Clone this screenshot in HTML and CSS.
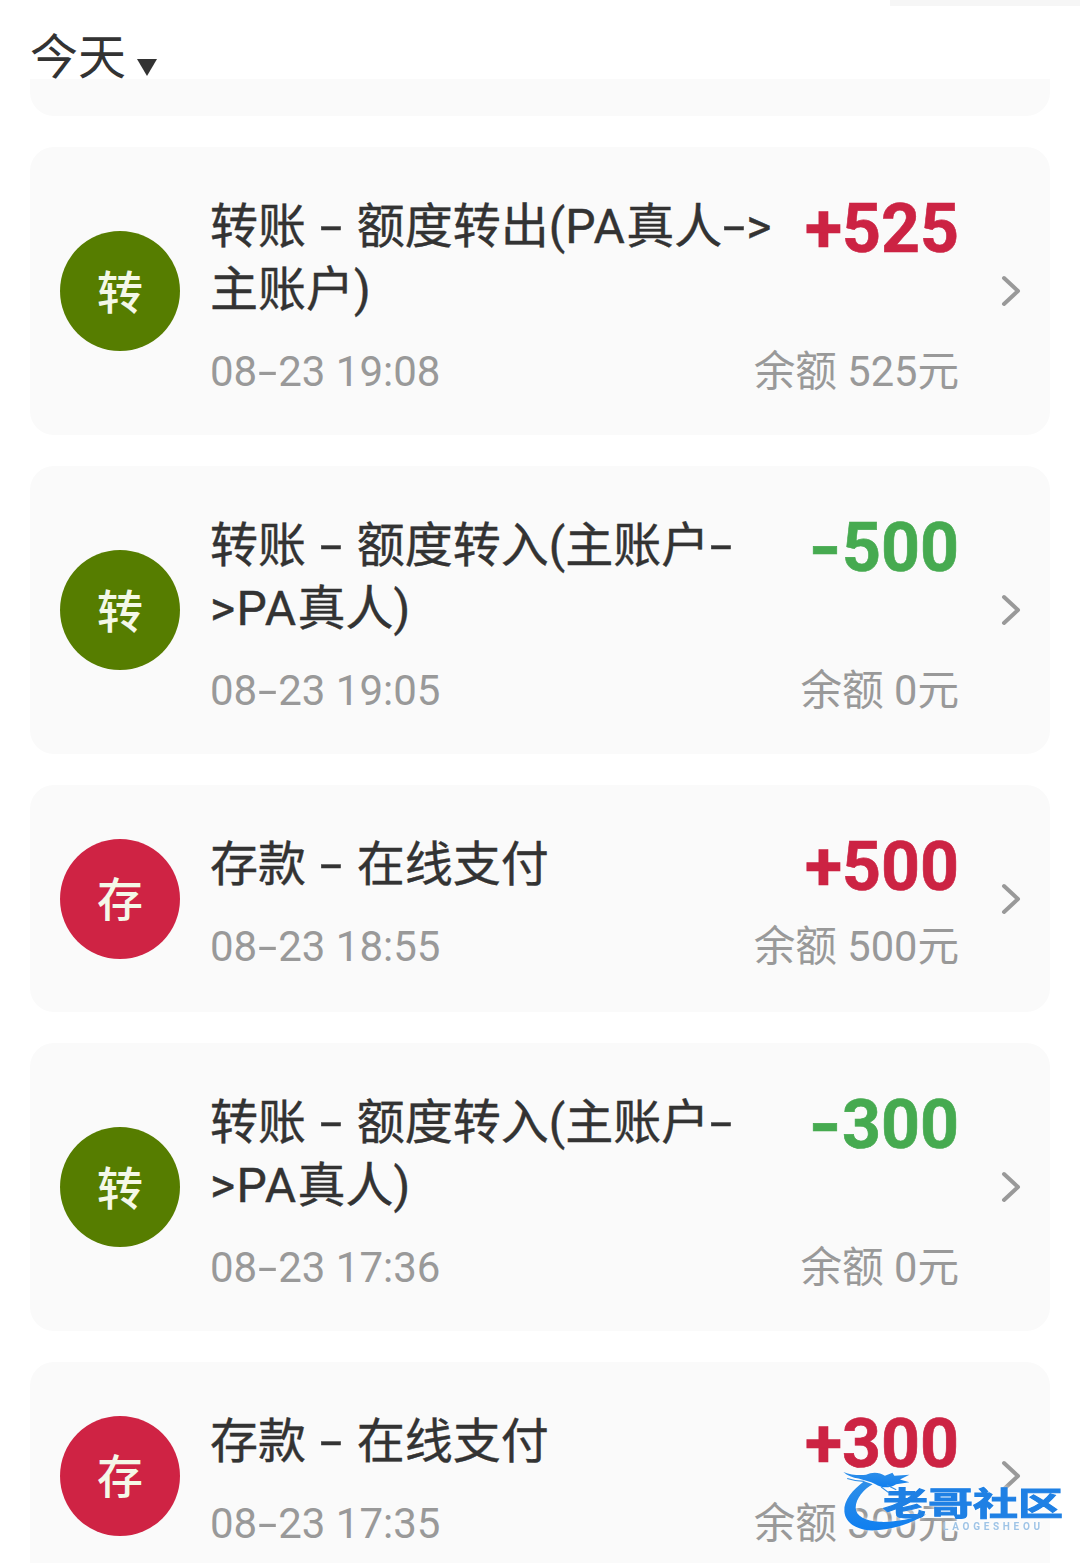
FILE: index.html
```html
<!DOCTYPE html>
<html lang="zh-CN">
<head>
<meta charset="utf-8">
<title>今天</title>
<link rel="stylesheet" href="styles.css">
</head>
<body>
<div class="page">
  <div class="topbar"></div>
  <div class="day"><span class="day-label">今天</span><span class="day-caret"></span></div>
  <div class="list">
    <div class="card card-stub"></div>

    <div class="card">
      <div class="badge badge-green">转</div>
      <div class="info">
        <div class="head">
          <div class="title">转账 <span class="dash">-</span> 额度转出(<span class="latin">PA</span>真人<span class="dash">-</span>&gt;<br>主账户)</div>
          <div class="amount plus">+525</div>
        </div>
        <div class="foot"><span class="time">08<span class="dash">-</span>23 19:08</span><span>余额 525元</span></div>
      </div>
      <svg class="chev" viewBox="0 0 20 32"><path d="M3 3 L17 16 L3 29"/></svg>
    </div>

    <div class="card">
      <div class="badge badge-green">转</div>
      <div class="info">
        <div class="head">
          <div class="title">转账 <span class="dash">-</span> 额度转入(主账户<span class="dash">-</span><br><span class="latin">&gt;PA</span>真人)</div>
          <div class="amount minus"><span class="dash">-</span>500</div>
        </div>
        <div class="foot"><span class="time">08<span class="dash">-</span>23 19:05</span><span>余额 0元</span></div>
      </div>
      <svg class="chev" viewBox="0 0 20 32"><path d="M3 3 L17 16 L3 29"/></svg>
    </div>

    <div class="card">
      <div class="badge badge-red">存</div>
      <div class="info info-single">
        <div class="head">
          <div class="title">存款 <span class="dash">-</span> 在线支付</div>
          <div class="amount plus">+500</div>
        </div>
        <div class="foot"><span class="time">08<span class="dash">-</span>23 18:55</span><span>余额 500元</span></div>
      </div>
      <svg class="chev" viewBox="0 0 20 32"><path d="M3 3 L17 16 L3 29"/></svg>
    </div>

    <div class="card">
      <div class="badge badge-green">转</div>
      <div class="info">
        <div class="head">
          <div class="title">转账 <span class="dash">-</span> 额度转入(主账户<span class="dash">-</span><br><span class="latin">&gt;PA</span>真人)</div>
          <div class="amount minus"><span class="dash">-</span>300</div>
        </div>
        <div class="foot"><span class="time">08<span class="dash">-</span>23 17:36</span><span>余额 0元</span></div>
      </div>
      <svg class="chev" viewBox="0 0 20 32"><path d="M3 3 L17 16 L3 29"/></svg>
    </div>

    <div class="card">
      <div class="badge badge-red">存</div>
      <div class="info info-single">
        <div class="head">
          <div class="title">存款 <span class="dash">-</span> 在线支付</div>
          <div class="amount plus">+300</div>
        </div>
        <div class="foot"><span class="time">08<span class="dash">-</span>23 17:35</span><span>余额 300元</span></div>
      </div>
      <svg class="chev" viewBox="0 0 20 32"><path d="M3 3 L17 16 L3 29"/></svg>
    </div>
  </div>

  <div class="mark">
    <svg class="mark-dragon" viewBox="0 0 120 70">
      <defs>
        <linearGradient id="dr" x1="0" y1="0" x2="0" y2="1">
          <stop offset="0" stop-color="#2f8fe8"/>
          <stop offset="1" stop-color="#0f7ff0"/>
        </linearGradient>
      </defs>
      <path fill="url(#dr)" d="M22 12 C10 21 0 32 1 44 C2 57 16 65 34 64 C52 63 72 57 88 47 C72 52 52 56 38 55 C24 54 13 49 13 40 C13 30 22 20 31 15 Z"/>
      <path fill="url(#dr)" d="M0 2 C8 5 16 6 24 5 C30 2 38 2 44 6 L52 3 L54 6 L70 5 L60 10 L70 13 L56 15 C48 20 40 19 34 15 C28 12 22 11 16 9 C10 8 4 6 0 2 Z"/>
      <path fill="none" stroke="#2f8fe8" stroke-width="1.2" d="M4 9 C10 11 16 12 22 12 M40 18 L48 24 M46 16 L56 21"/>
    </svg>
    <div class="mark-name">老哥社区</div>
    <div class="mark-sub">LAOGESHEOU</div>
  </div>
</div>
</body>
</html>
```
FILE: styles.css
```css
* { box-sizing: border-box; }
html, body { margin: 0; padding: 0; background: #fff; }
body { font-family: Roboto, "Noto Sans CJK SC", sans-serif; }
.page { position: relative; width: 1080px; height: 1563px; overflow: hidden; background: #fff; }
.topbar { position: absolute; top: 0; right: 0; width: 190px; height: 6px; background: #f6f6f6; }
.day { height: 79px; padding: 25px 0 0 30px; display: flex; align-items: flex-start; }
.day-label { font-size: 48px; line-height: 66px; height: 54px; color: #333; }
.day-caret { width: 0; height: 0; margin: 34px 0 0 11px; border-left: 10px solid transparent; border-right: 10px solid transparent; border-top: 17px solid #333; }
.list { display: flex; flex-direction: column; gap: 31px; padding: 0 30px; }
.card { display: flex; align-items: center; flex: none; padding: 0 30px; background: #fafafa; border-radius: 24px; }
.card-stub { height: 37px; padding: 0; border-radius: 0 0 24px 24px; }
.badge { flex: none; width: 120px; height: 120px; padding-top: 3px; border-radius: 50%; display: flex; align-items: center; justify-content: center; color: #f4f8e8; font-size: 46px; line-height: 1; font-weight: 500; }
.badge-green { background: #567d00; }
.badge-red { background: #cf2344; }
.info { flex: none; width: 749px; margin-left: 30px; padding: 48px 0 38px; }
.info-single { padding-bottom: 40px; }
.head { display: flex; justify-content: space-between; align-items: flex-start; }
.title { font-size: 48px; line-height: 63px; color: #333; white-space: nowrap; word-spacing: 1.5px; -webkit-text-stroke: 0.4px #333; }
.latin { letter-spacing: 1.3px; }
.dash { display: inline-block; width: 0.5em; text-align: center; transform: scaleX(1.65); }
.amount { font-size: 68px; line-height: 57px; margin-top: 6px; font-weight: 700; white-space: nowrap; -webkit-text-stroke: 0.6px currentColor; }
.amount .dash { width: 0.48em; transform: scaleX(1.25); }
.plus { color: #cc2343; }
.minus { color: #46aa50; }
.foot { display: flex; justify-content: space-between; margin-top: 26px; font-size: 41.6px; line-height: 50px; color: #999; white-space: nowrap; }
.time { font-size: 42px; }
.chev { flex: none; width: 20px; height: 32px; margin-left: 42px; fill: none; stroke: #999; stroke-width: 4; stroke-linecap: round; stroke-linejoin: round; }
.mark { position: absolute; left: 842px; top: 1468px; width: 226px; height: 66px; filter: drop-shadow(0 0 2px #fff); }
.mark-dragon { position: absolute; left: 0; top: 2px; width: 116px; height: 66px; }
.mark-name { position: absolute; left: 41px; top: 19px; height: 34px; font-size: 45px; line-height: 34px; font-weight: 700; white-space: nowrap; transform: scaleY(0.72); color: #1f80e4; -webkit-text-stroke: 1.4px #1f80e4; }
.mark-sub { position: absolute; left: 101px; top: 54px; font-size: 10px; line-height: 10px; font-weight: 700; letter-spacing: 3.7px; color: #9fc4e6; white-space: nowrap; }
```
